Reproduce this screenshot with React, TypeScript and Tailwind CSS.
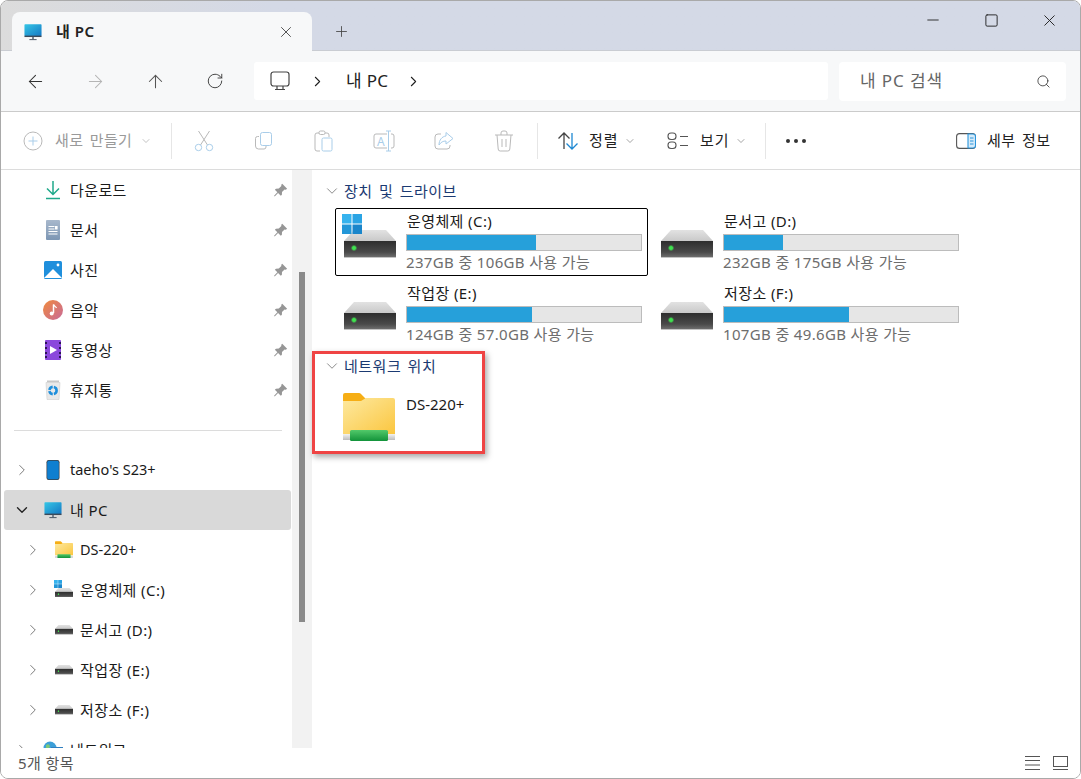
import { ArrowLeft, ArrowRight, ArrowUp, ChevronDown, ChevronRight, Minus, Plus, RotateCw, Search, Square, X } from 'lucide-react';
import type { ReactNode } from 'react';

function MonitorIcon({ size = 18 }: { size?: number }) {
  return (
    <svg width={size} height={size} viewBox="0 0 20 20">
      <defs>
        <linearGradient id="screen" x1="0" y1="0" x2="1" y2="1">
          <stop offset="0" stopColor="#35c6e6" />
          <stop offset="1" stopColor="#1478c4" />
        </linearGradient>
      </defs>
      <rect x="0.5" y="1.5" width="19" height="13" rx="0.8" fill="url(#screen)" />
      <rect x="0.5" y="14" width="19" height="1.6" fill="#3b4a5a" />
      <rect x="9" y="15.5" width="2" height="2.5" fill="#6a7785" />
      <rect x="6" y="18" width="8" height="1" fill="#3b4a5a" />
    </svg>
  );
}

function DriveIcon({ width = 52 }: { width?: number }) {
  return (
    <svg width={width} height={(width * 28) / 52} viewBox="0 0 52 28" className="block">
      <defs>
        <linearGradient id="driveBody" x1="0" y1="0" x2="0" y2="1">
          <stop offset="0" stopColor="#2e2e2e" />
          <stop offset="0.7" stopColor="#4a4a4a" />
          <stop offset="1" stopColor="#6d6d6d" />
        </linearGradient>
        <linearGradient id="driveTop" x1="0" y1="0" x2="0" y2="1">
          <stop offset="0" stopColor="#e2e2e2" />
          <stop offset="1" stopColor="#c9c9c9" />
        </linearGradient>
        <radialGradient id="led">
          <stop offset="0.45" stopColor="#3fe24f" />
          <stop offset="1" stopColor="#3fe24f" stopOpacity="0" />
        </radialGradient>
      </defs>
      <path d="M10 0H42L52 11H0Z" fill="url(#driveTop)" />
      <rect x="0" y="11" width="52" height="16" fill="url(#driveBody)" />
      <rect x="0" y="27" width="52" height="1" fill="#c4c4c4" />
      <circle cx="10" cy="18" r="3.2" fill="url(#led)" />
    </svg>
  );
}

function WinLogo({ size = 20 }: { size?: number }) {
  return (
    <svg width={size} height={size} viewBox="0 0 20 20" className="block">
      <rect x="0" y="0" width="9.5" height="9.5" fill="#36b3ee" />
      <rect x="10.5" y="0" width="9.5" height="9.5" fill="#2aa4e4" />
      <rect x="0" y="10.5" width="9.5" height="9.5" fill="#2397d8" />
      <rect x="10.5" y="10.5" width="9.5" height="9.5" fill="#1a86cb" />
    </svg>
  );
}

function FolderIcon({ width = 52 }: { width?: number }) {
  return (
    <svg width={width} height={width} viewBox="0 0 52 52" className="block">
      <defs>
        <linearGradient id="folderBody" x1="0" y1="0" x2="1" y2="1">
          <stop offset="0" stopColor="#fde9a0" />
          <stop offset="1" stopColor="#fbc63f" />
        </linearGradient>
        <linearGradient id="netBar" x1="0" y1="0" x2="0" y2="1">
          <stop offset="0" stopColor="#52c96a" />
          <stop offset="1" stopColor="#12933a" />
        </linearGradient>
        <linearGradient id="netStrip" x1="0" y1="0" x2="0" y2="1">
          <stop offset="0" stopColor="#f2f2f2" />
          <stop offset="1" stopColor="#bdbdbd" />
        </linearGradient>
      </defs>
      <path d="M0 3a2 2 0 0 1 2-2H16a3 3 0 0 1 2 1L23 7a2 2 0 0 1-2 3H0Z" fill="#f6ae15" />
      <path d="M0 9H18L23 6H50a2 2 0 0 1 2 2V42H0Z" fill="url(#folderBody)" />
      <rect x="0" y="42" width="52" height="6" fill="url(#netStrip)" />
      <rect x="7" y="38" width="38" height="11" rx="1.5" fill="url(#netBar)" />
    </svg>
  );
}

function FileIcon() {
  return (
    <svg width="18" height="20" viewBox="0 0 18 20">
      <defs>
        <linearGradient id="doc" x1="0" y1="0" x2="0" y2="1">
          <stop offset="0" stopColor="#a8b8cc" />
          <stop offset="1" stopColor="#7c96b4" />
        </linearGradient>
      </defs>
      <rect x="2" y="0" width="14" height="20" rx="1" fill="url(#doc)" />
      <path d="M4.5 6.5h6M4.5 9h6M4.5 11.5h9M4.5 14h9" stroke="#fff" strokeWidth="1" />
      <rect x="11" y="6" width="2.6" height="3.5" fill="#fff" />
    </svg>
  );
}

function PhotoIcon() {
  return (
    <svg width="20" height="20" viewBox="0 0 20 20">
      <rect x="1" y="1" width="18" height="18" rx="1.5" fill="#1f8fdc" />
      <path d="M1 18L10 9L19 18Z" fill="#fff" />
      <circle cx="15" cy="5" r="1.4" fill="#fff" />
    </svg>
  );
}

function MusicIcon() {
  return (
    <svg width="20" height="20" viewBox="0 0 20 20">
      <defs>
        <linearGradient id="music" x1="0" y1="0" x2="1" y2="1">
          <stop offset="0" stopColor="#f08a3c" />
          <stop offset="1" stopColor="#c86a9a" />
        </linearGradient>
      </defs>
      <circle cx="10" cy="10" r="10" fill="url(#music)" />
      <path d="M10.5 4.5V13" stroke="#fff" strokeWidth="1.5" />
      <path d="M10.5 4.5C11 6.5 13 6.5 13.5 8" stroke="#fff" strokeWidth="1.2" fill="none" />
      <circle cx="8.7" cy="13.5" r="2" fill="#fff" />
    </svg>
  );
}

function VideoIcon() {
  return (
    <svg width="18" height="20" viewBox="0 0 18 20">
      <rect x="1" y="0" width="16" height="20" rx="1" fill="#8b48dc" />
      <rect x="1" y="2" width="2" height="2" fill="#2d1658" />
      <rect x="1" y="7" width="2" height="2" fill="#2d1658" />
      <rect x="1" y="12" width="2" height="2" fill="#2d1658" />
      <rect x="1" y="16" width="2" height="2" fill="#2d1658" />
      <rect x="15" y="2" width="2" height="2" fill="#2d1658" />
      <rect x="15" y="7" width="2" height="2" fill="#2d1658" />
      <rect x="15" y="12" width="2" height="2" fill="#2d1658" />
      <rect x="15" y="16" width="2" height="2" fill="#2d1658" />
      <path d="M6 6L13 10L6 14Z" fill="#fff" />
    </svg>
  );
}

function RecycleIcon() {
  return (
    <svg width="16" height="20" viewBox="0 0 16 20">
      <rect x="2" y="0.5" width="12" height="2" fill="#c8c8c8" />
      <path d="M1 2.5H15L14 19.5H2Z" fill="#e9e9e9" stroke="#cfcfcf" strokeWidth="0.6" />
      <circle cx="8" cy="10.5" r="3.6" fill="none" stroke="#1f8fdc" strokeWidth="2.6" strokeDasharray="4.6 1.2" />
    </svg>
  );
}

function PhoneIcon() {
  return (
    <svg width="14" height="20" viewBox="0 0 14 20">
      <rect x="0.5" y="0" width="13" height="20" rx="2.2" fill="#3a3f46" />
      <rect x="1.2" y="0.8" width="11.6" height="18.4" rx="1.6" fill="#0f7fd0" />
    </svg>
  );
}

function NetworkIcon() {
  return (
    <svg width="20" height="20" viewBox="0 0 20 20">
      <circle cx="7" cy="8" r="6.5" fill="#3c9fd8" />
      <path d="M3 5C6 3 8 6 6 8S3 10 3 8Z" fill="#7cc87a" />
      <rect x="8" y="7" width="12" height="9" fill="#2f7fc0" />
      <rect x="5" y="15" width="15" height="3" fill="#5b6b7a" />
    </svg>
  );
}

function PinIcon() {
  return (
    <svg width="15" height="15" viewBox="0 0 14 14">
      <path d="M8.6 0.8L13.2 5.4L11.9 6.2L10.8 6L8.4 8.4L8.3 11L7.3 12L4.7 9.3L1.6 12.6L1 12L4.1 8.7L1.7 6.3L2.8 5.3L5.4 5.2L7.8 2.8L7.7 1.7Z" fill="#969696" />
    </svg>
  );
}

function CutIcon() {
  return (
    <svg width="20" height="22" viewBox="0 0 20 22" fill="none" strokeWidth="1">
      <path d="M4.5 1L13.5 15M15.5 1L6.5 15" stroke="#b9b9b9" />
      <circle cx="4.5" cy="17.5" r="3.2" stroke="#a9cde9" />
      <circle cx="15.5" cy="17.5" r="3.2" stroke="#a9cde9" />
    </svg>
  );
}

function CopyIcon() {
  return (
    <svg width="20" height="20" viewBox="0 0 20 20" fill="none" strokeWidth="1">
      <path d="M5 5.5H3.5a2 2 0 0 0-2 2V15a3 3 0 0 0 3 3H10a2 2 0 0 0 2-2v-1.5" stroke="#b9b9b9" />
      <rect x="6.5" y="1.5" width="11" height="13" rx="2" stroke="#a9cde9" />
    </svg>
  );
}

function PasteIcon() {
  return (
    <svg width="20" height="22" viewBox="0 0 20 22" fill="none" strokeWidth="1">
      <path d="M6 21H3a2 2 0 0 1-2-2V5a2 2 0 0 1 2-2h10a2 2 0 0 1 2 2v2" stroke="#b9b9b9" />
      <rect x="5" y="1" width="6" height="3.5" rx="1.5" stroke="#b9b9b9" fill="#fff" />
      <rect x="8" y="8" width="10" height="13" rx="1.5" stroke="#a9cde9" />
    </svg>
  );
}

function RenameIcon() {
  return (
    <svg width="22" height="22" viewBox="0 0 22 22" fill="none" strokeWidth="1">
      <path d="M14 4H3a2 2 0 0 0-2 2V16a2 2 0 0 0 2 2H14M18 4h1a2 2 0 0 1 2 2V16a2 2 0 0 1-2 2h-1" stroke="#b9b9b9" />
      <path d="M13 1h5M15.5 1V21M13 21h5" stroke="#a9cde9" />
      <text x="4" y="15.5" fontSize="12" fill="#a9cde9" stroke="none">A</text>
    </svg>
  );
}

function ShareIcon() {
  return (
    <svg width="20" height="20" viewBox="0 0 20 20" fill="none" strokeWidth="1">
      <path d="M7 3H4a3 3 0 0 0-3 3V15a3 3 0 0 0 3 3H13a3 3 0 0 0 3-3V14" stroke="#b9b9b9" />
      <path d="M12 1.5L19 7.5L12 13V10C9 10 7 11 5 14C5 9 8 5.5 12 5Z" stroke="#a9cde9" />
    </svg>
  );
}

function TrashIcon() {
  return (
    <svg width="20" height="22" viewBox="0 0 20 22" fill="none" stroke="#b9b9b9" strokeWidth="1">
      <path d="M1 5H19M7 5V3a2 2 0 0 1 2-2h2a2 2 0 0 1 2 2V5M3 5L4.2 19a2 2 0 0 0 2 2H13.8a2 2 0 0 0 2-2L17 5M8 9V17M12 9V17" />
    </svg>
  );
}

function SortIcon() {
  return (
    <svg width="22" height="20" viewBox="0 0 22 20" fill="none" strokeWidth="1.3">
      <path d="M7 18V2M1.5 7.5L7 2L12.5 7.5" stroke="#444" />
      <path d="M15 2V18M9.5 12.5L15 18L20.5 12.5" stroke="#1e88d2" />
    </svg>
  );
}

function ViewIcon() {
  return (
    <svg width="22" height="18" viewBox="0 0 22 18" fill="none" stroke="#555" strokeWidth="1.1">
      <rect x="1" y="1" width="8" height="6.5" rx="3" />
      <rect x="1" y="10" width="8" height="6.5" rx="3" />
      <path d="M13 4.5H21M13 13.5H21" />
    </svg>
  );
}

function DetailsIcon() {
  return (
    <svg width="20" height="16" viewBox="0 0 20 16" fill="none">
      <rect x="0.6" y="0.6" width="18.8" height="14.8" rx="3" stroke="#555" strokeWidth="1.1" />
      <path d="M12 1H17a2.5 2.5 0 0 1 2.5 2.5v9A2.5 2.5 0 0 1 17 15H12Z" fill="#d6ebf9" stroke="#2a95dc" strokeWidth="1.1" />
      <path d="M14 5H17.5M14 8H17.5M14 11H17.5" stroke="#2a95dc" />
    </svg>
  );
}

function PcOutlineIcon() {
  return (
    <svg width="20" height="20" viewBox="0 0 20 20" fill="none" stroke="#444" strokeWidth="1.2">
      <rect x="1" y="1" width="18" height="14" rx="2.5" />
      <path d="M7 15V18M13 15V18M5 18.5H15" />
    </svg>
  );
}

function TabIconSlot({ children }: { children: ReactNode }) {
  return <div className="w-[60px] flex items-center justify-center">{children}</div>;
}

function Separator() {
  return <div className="w-px h-[36px] bg-[#e6e6e6]" />;
}

type NavRowProps = {
  icon: ReactNode;
  label: string;
  level?: number;
  pinned?: boolean;
  latin?: boolean;
  chevron?: 'right' | 'down';
  selected?: boolean;
};

function NavRow({ icon, label, level = 0, pinned, latin, chevron, selected }: NavRowProps) {
  return (
    <div className={`h-10 ml-[3px] w-[287px] flex items-center rounded-[3px] ${selected ? 'bg-[#d9d9d9]' : ''}`}>
      {level === 1 && <div className="w-[11px] shrink-0" />}
      <div className="w-[36px] shrink-0 flex items-center justify-center">
        {chevron === 'right' && <ChevronRight size={18} strokeWidth={1.3} className="text-[#777]" />}
        {chevron === 'down' && <ChevronDown size={18} strokeWidth={1.8} className="text-[#222]" />}
      </div>
      <div className="w-[26px] shrink-0 flex items-center justify-center">{icon}</div>
      <span
        className={`${level === 1 ? 'ml-[3px]' : 'ml-[4px]'} text-[#1a1a1a] whitespace-nowrap ${
          latin ? 'text-[14.5px]' : 'text-[15px] tracking-[0.4px]'
        }`}
      >
        {label}
      </span>
      {pinned && (
        <div className="ml-auto mr-[3px]">
          <PinIcon />
        </div>
      )}
    </div>
  );
}

const drives = [
  { name: '운영체제 (C:)', sub: '237GB 중 106GB 사용 가능', used: 55, system: true, selected: true },
  { name: '문서고 (D:)', sub: '232GB 중 175GB 사용 가능', used: 25 },
  { name: '작업장 (E:)', sub: '124GB 중 57.0GB 사용 가능', used: 53.5 },
  { name: '저장소 (F:)', sub: '107GB 중 49.6GB 사용 가능', used: 53.5 },
];

function SectionHeading({ label }: { label: string }) {
  return (
    <div className="h-6 flex items-center pl-[11px]">
      <ChevronDown size={18} strokeWidth={1} className="text-[#666]" />
      <span className="ml-[3px] text-[15px] tracking-[0.5px] [word-spacing:2px] text-[#1b3a72] whitespace-nowrap">{label}</span>
    </div>
  );
}

function DriveTile({ drive }: { drive: (typeof drives)[number] }) {
  return (
    <div className={`w-[313px] h-[68px] flex rounded-[2px] border ${drive.selected ? 'border-black' : 'border-transparent'}`}>
      <div className="relative w-[70px] shrink-0 pl-[8px] pt-[21px]">
        <DriveIcon />
        {drive.system && (
          <div className="absolute left-[6px] top-[5px]">
            <WinLogo />
          </div>
        )}
      </div>
      <div className="w-[236px]">
        <div className="h-[25px] pl-[1px] text-[15px] tracking-[0.4px] text-[#1a1a1a] whitespace-nowrap leading-[24px]">{drive.name}</div>
        <div className="h-[17px] border border-[#bcbcbc] bg-[#e6e6e6]">
          <div className="h-full bg-[#26a0da]" style={{ width: `${drive.used}%` }} />
        </div>
        <div className="text-[15px] tracking-[0.35px] text-[#6d6d6d] whitespace-nowrap leading-[23px]">{drive.sub}</div>
      </div>
    </div>
  );
}

export default function App() {
  return (
    <div className="w-[1081px] h-[779px] bg-white overflow-hidden font-['Noto_Sans','Noto_Sans_CJK_KR',sans-serif]">
      <div className="relative w-full h-full flex flex-col border border-[#a9a9a9] rounded-[8px] overflow-hidden">
        {/* Title bar */}
        <div className="h-[50px] shrink-0 flex items-start bg-linear-to-r from-[#dcdcdc] to-[#d4d9e6] to-[25%] border-b border-[#c9ccd2]">
          <div className="ml-[11px] mt-[11px] w-[300px] h-[39px] flex items-center bg-[#f7f8f9] rounded-t-[8px]">
            <div className="ml-[12px]">
              <MonitorIcon />
            </div>
            <span className="ml-[14px] text-[15px] tracking-[0.5px] font-semibold text-[#222]">내 PC</span>
            <X size={18} strokeWidth={1.1} className="ml-auto mr-[17px] text-[#333]" />
          </div>
          <div className="ml-[14px] mt-[11px] w-[30px] h-[39px] flex items-center justify-center">
            <Plus size={17} strokeWidth={1.2} className="text-[#444]" />
          </div>
          <div className="ml-auto mr-[1px] h-[38px] flex">
            <div className="w-[58px] flex items-center justify-center">
              <Minus size={18} strokeWidth={1.2} className="text-[#222]" />
            </div>
            <div className="w-[58px] flex items-center justify-center">
              <Square size={15} strokeWidth={1.5} className="text-[#222]" />
            </div>
            <div className="w-[59px] flex items-center justify-center">
              <X size={19} strokeWidth={1.2} className="text-[#222]" />
            </div>
          </div>
        </div>

        {/* Nav bar */}
        <div className="h-[61px] shrink-0 flex items-center pl-[4px] bg-[#f7f8f9] border-b border-[#cbcbcb]">
          <TabIconSlot>
            <ArrowLeft size={21} strokeWidth={1.2} className="text-[#333]" />
          </TabIconSlot>
          <TabIconSlot>
            <ArrowRight size={21} strokeWidth={1.2} className="text-[#b5b5b5]" />
          </TabIconSlot>
          <TabIconSlot>
            <ArrowUp size={21} strokeWidth={1.2} className="text-[#555]" />
          </TabIconSlot>
          <TabIconSlot>
            <RotateCw size={18} strokeWidth={1.2} className="text-[#333]" />
          </TabIconSlot>
          <div className="ml-[9px] w-[574px] h-[38px] flex items-center bg-white rounded-[3px] pl-[16px]">
            <PcOutlineIcon />
            <ChevronRight size={17} strokeWidth={1.5} className="ml-[19px] text-[#222]" />
            <span className="ml-[20px] text-[17px] tracking-[0.3px] text-[#222]">내 PC</span>
            <ChevronRight size={17} strokeWidth={1.5} className="ml-[17px] text-[#222]" />
          </div>
          <div className="ml-[11px] w-[227px] h-[39px] flex items-center bg-white rounded-[4px] pl-[21px]">
            <span className="text-[17px] tracking-[0.9px] text-[#666]">내 PC 검색</span>
            <Search size={15} strokeWidth={1.3} className="ml-auto mr-[15px] text-[#333]" />
          </div>
        </div>

        {/* Toolbar */}
        <div className="h-[58px] shrink-0 flex items-center bg-white border-b border-[#dcdcdc]">
          <svg width="20" height="20" viewBox="0 0 20 20" fill="none" className="ml-[22px]">
            <circle cx="10" cy="10" r="9" stroke="#b9b9b9" />
            <path d="M10 5.5V14.5M5.5 10H14.5" stroke="#a9cde9" />
          </svg>
          <span className="ml-[12px] w-[79px] text-[15px] tracking-[0.4px] [word-spacing:2px] text-[#9a9a9a] whitespace-nowrap">새로 만들기</span>
          <ChevronDown size={12} strokeWidth={1.2} className="ml-[6px] text-[#9a9a9a]" />
          <div className="ml-[19px] flex items-center">
            <Separator />
          </div>
          <div className="ml-[2px] flex items-center">
            <TabIconSlot><CutIcon /></TabIconSlot>
            <TabIconSlot><CopyIcon /></TabIconSlot>
            <TabIconSlot><PasteIcon /></TabIconSlot>
            <TabIconSlot><RenameIcon /></TabIconSlot>
            <TabIconSlot><ShareIcon /></TabIconSlot>
            <TabIconSlot><TrashIcon /></TabIconSlot>
          </div>
          <div className="ml-[3px]">
            <Separator />
          </div>
          <div className="ml-[19px]">
            <SortIcon />
          </div>
          <span className="ml-[10px] w-[30px] text-[15px] tracking-[1px] text-[#222] whitespace-nowrap">정렬</span>
          <ChevronDown size={12} strokeWidth={1.2} className="ml-[5px] text-[#666]" />
          <div className="ml-[31px]">
            <ViewIcon />
          </div>
          <span className="ml-[11px] w-[30px] text-[15px] tracking-[1px] text-[#222] whitespace-nowrap">보기</span>
          <ChevronDown size={12} strokeWidth={1.2} className="ml-[5px] text-[#666]" />
          <div className="ml-[18px]">
            <Separator />
          </div>
          <div className="ml-[20px] flex gap-[4px]">
            <span className="w-[4px] h-[4px] rounded-full bg-[#333]" />
            <span className="w-[4px] h-[4px] rounded-full bg-[#333]" />
            <span className="w-[4px] h-[4px] rounded-full bg-[#333]" />
          </div>
          <div className="ml-auto">
            <DetailsIcon />
          </div>
          <span className="ml-[11px] mr-[29px] w-[64px] text-[15px] tracking-[0.5px] [word-spacing:2px] text-[#222] whitespace-nowrap">세부 정보</span>
        </div>

        {/* Main */}
        <div className="relative flex-1 min-h-0 flex">
          <div className="w-[291px] shrink-0 overflow-hidden">
            <NavRow icon={<svg width="16" height="20" viewBox="0 0 16 20" fill="none" stroke="#1fa88a" strokeWidth="1.5"><path d="M8 1V14M2 8.5L8 14.5L14 8.5M1 18.5H15" /></svg>} label="다운로드" pinned />
            <NavRow icon={<FileIcon />} label="문서" pinned />
            <NavRow icon={<PhotoIcon />} label="사진" pinned />
            <NavRow icon={<MusicIcon />} label="음악" pinned />
            <NavRow icon={<VideoIcon />} label="동영상" pinned />
            <NavRow icon={<RecycleIcon />} label="휴지통" pinned />
            <div className="h-10 flex items-center pl-[13px]">
              <div className="w-[268px] h-px bg-[#dcdcdc]" />
            </div>
            <NavRow icon={<PhoneIcon />} label="taeho's S23+" chevron="right" latin />
            <NavRow icon={<MonitorIcon />} label="내 PC" chevron="down" selected />
            <NavRow icon={<FolderIcon width={18} />} label="DS-220+" chevron="right" level={1} latin />
            <NavRow
              icon={
                <div className="relative pt-[5px]">
                  <DriveIcon width={18} />
                  <div className="absolute left-[-1px] top-[-3px]">
                    <WinLogo size={8} />
                  </div>
                </div>
              }
              label="운영체제 (C:)"
              chevron="right"
              level={1}
            />
            <NavRow icon={<DriveIcon width={18} />} label="문서고 (D:)" chevron="right" level={1} />
            <NavRow icon={<DriveIcon width={18} />} label="작업장 (E:)" chevron="right" level={1} />
            <NavRow icon={<DriveIcon width={18} />} label="저장소 (F:)" chevron="right" level={1} />
            <NavRow icon={<NetworkIcon />} label="네트워크" chevron="right" />
          </div>

          {/* Sidebar scrollbar */}
          <div className="w-[20px] shrink-0 bg-[#f2f2f2] pt-[102px] pl-[7px]">
            <div className="w-[6px] h-[350px] bg-[#8a8a8a]" />
          </div>

          {/* Content */}
          <div className="flex-1 min-w-0 pt-[9px]">
            <SectionHeading label="장치 및 드라이브" />
            <div className="mt-[5px] ml-[23px] grid grid-cols-[317px_317px] gap-y-[4px]">
              {drives.map((drive) => (
                <DriveTile key={drive.name} drive={drive} />
              ))}
            </div>
            <div className="mt-[6px]">
              <SectionHeading label="네트워크 위치" />
            </div>
            <div className="mt-[14px] ml-[31px] flex">
              <FolderIcon />
              <span className="ml-[11px] text-[15px] text-[#1a1a1a] leading-[24px]">DS-220+</span>
            </div>
          </div>

          {/* Annotation */}
          <div className="absolute left-[311px] top-[181px] w-[173px] h-[103px] border-[3px] border-[#ef4444] shadow-[2px_3px_6px_rgba(0,0,0,0.35)]" />
        </div>

        {/* Status bar */}
        <div className="h-[30px] shrink-0 flex items-center bg-white pl-[17px]">
          <span className="text-[15px] tracking-[0.4px] text-[#555] whitespace-nowrap">5개 항목</span>
          <svg width="15" height="14" viewBox="0 0 15 14" fill="none" stroke="#555" className="ml-auto">
            <path d="M0 0.5H15M0 4.5H15M0 9H15M0 13.5H15" />
          </svg>
          <svg width="15" height="14" viewBox="0 0 15 14" fill="none" stroke="#555" className="ml-[13px] mr-[12px]">
            <rect x="0.5" y="0.5" width="14" height="10" />
            <path d="M0 13.5H15" />
          </svg>
        </div>
      </div>
    </div>
  );
}
